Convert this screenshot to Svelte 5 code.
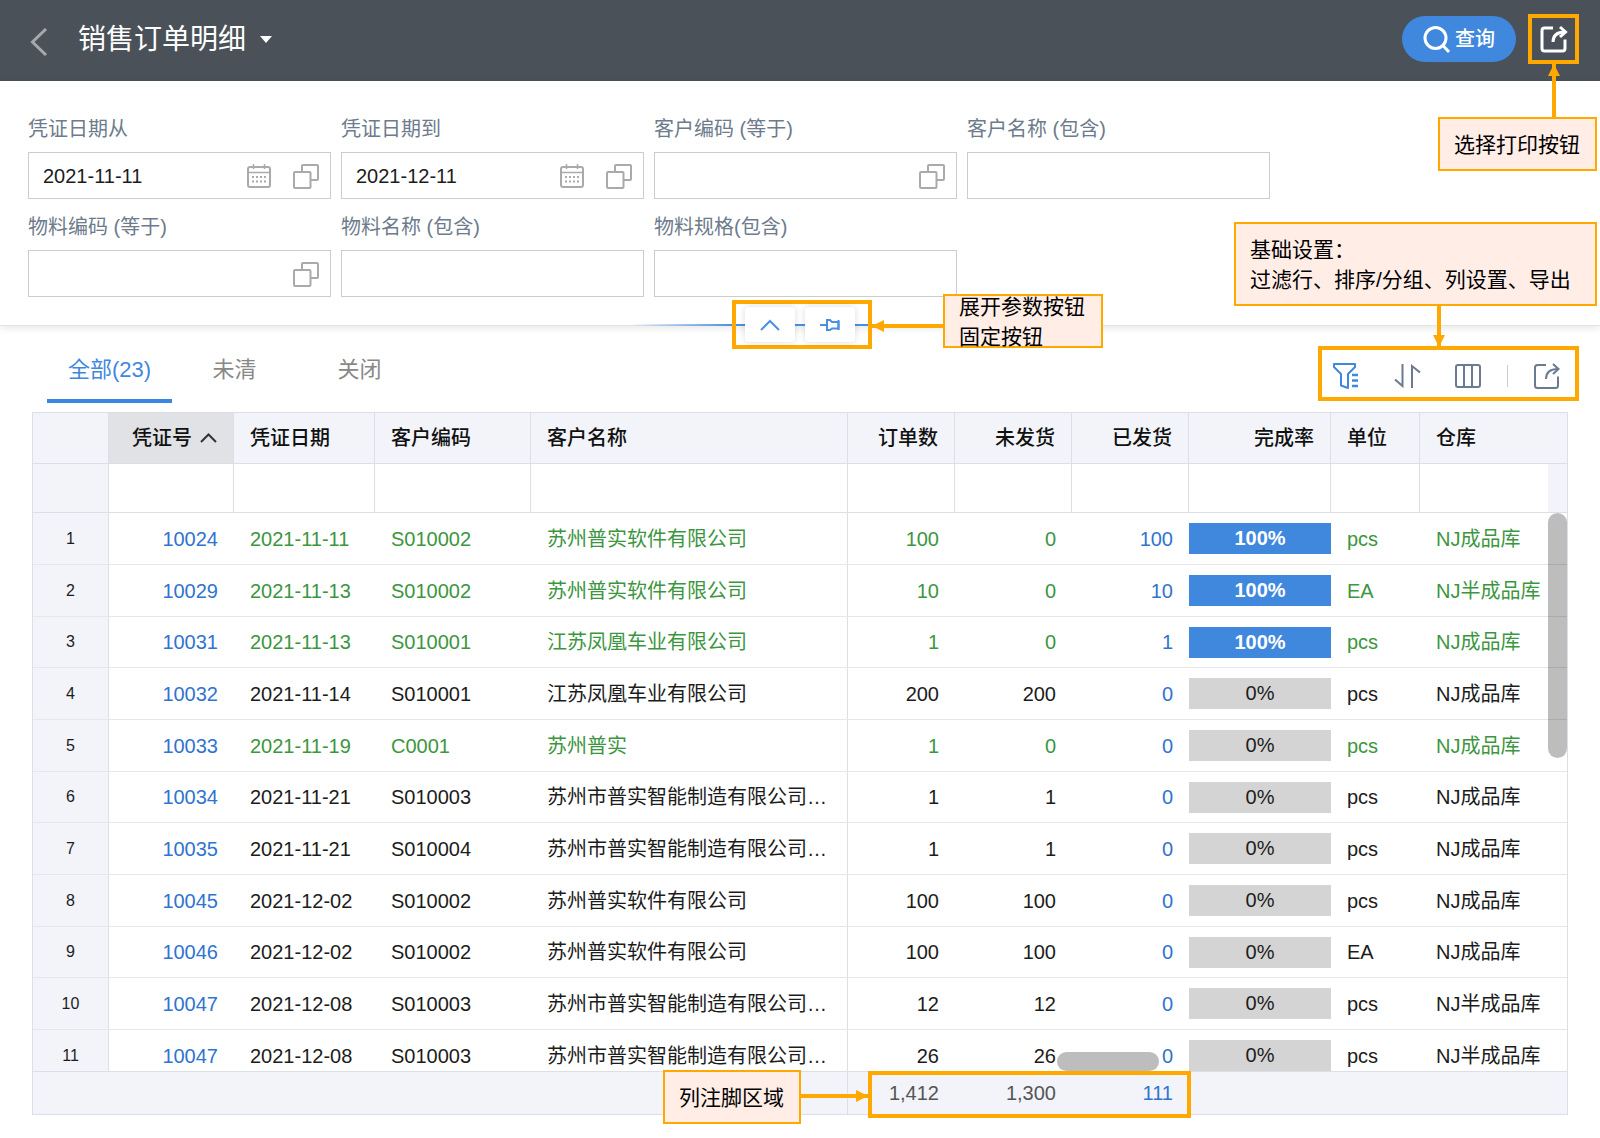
<script lang="ts">
  interface IField {
    id: string;
    label: string;
    value: string;
    date?: boolean;
    picker?: boolean;
  }
  interface IRow {
    no: string;
    date: string;
    code: string;
    name: string;
    ordered: string;
    open: string;
    shipped: string;
    rate: number;
    unit: string;
    store: string;
    done?: boolean;
  }

  let fields: IField[] = $state([
    { id: "dateFrom", label: "凭证日期从", value: "2021-11-11", date: true, picker: true },
    { id: "dateTo", label: "凭证日期到", value: "2021-12-11", date: true, picker: true },
    { id: "custCode", label: "客户编码 (等于)", value: "", picker: true },
    { id: "custName", label: "客户名称 (包含)", value: "" },
    { id: "itemCode", label: "物料编码 (等于)", value: "", picker: true },
    { id: "itemName", label: "物料名称 (包含)", value: "" },
    { id: "itemSpec", label: "物料规格(包含)", value: "" },
  ]);

  const tabs = ["全部(23)", "未清", "关闭"];
  let active = $state(0);

  const columns = [
    { title: "凭证号", num: true, sorted: true },
    { title: "凭证日期" },
    { title: "客户编码" },
    { title: "客户名称" },
    { title: "订单数", num: true },
    { title: "未发货", num: true },
    { title: "已发货", num: true },
    { title: "完成率", num: true },
    { title: "单位" },
    { title: "仓库" },
  ];

  const smart = "苏州市普实智能制造有限公司…";
  const soft = "苏州普实软件有限公司";
  const bike = "江苏凤凰车业有限公司";
  const rows: IRow[] = [
    { no: "10024", date: "2021-11-11", code: "S010002", name: soft, ordered: "100", open: "0", shipped: "100", rate: 100, unit: "pcs", store: "NJ成品库", done: true },
    { no: "10029", date: "2021-11-13", code: "S010002", name: soft, ordered: "10", open: "0", shipped: "10", rate: 100, unit: "EA", store: "NJ半成品库", done: true },
    { no: "10031", date: "2021-11-13", code: "S010001", name: bike, ordered: "1", open: "0", shipped: "1", rate: 100, unit: "pcs", store: "NJ成品库", done: true },
    { no: "10032", date: "2021-11-14", code: "S010001", name: bike, ordered: "200", open: "200", shipped: "0", rate: 0, unit: "pcs", store: "NJ成品库" },
    { no: "10033", date: "2021-11-19", code: "C0001", name: "苏州普实", ordered: "1", open: "0", shipped: "0", rate: 0, unit: "pcs", store: "NJ成品库", done: true },
    { no: "10034", date: "2021-11-21", code: "S010003", name: smart, ordered: "1", open: "1", shipped: "0", rate: 0, unit: "pcs", store: "NJ成品库" },
    { no: "10035", date: "2021-11-21", code: "S010004", name: smart, ordered: "1", open: "1", shipped: "0", rate: 0, unit: "pcs", store: "NJ成品库" },
    { no: "10045", date: "2021-12-02", code: "S010002", name: soft, ordered: "100", open: "100", shipped: "0", rate: 0, unit: "pcs", store: "NJ成品库" },
    { no: "10046", date: "2021-12-02", code: "S010002", name: soft, ordered: "100", open: "100", shipped: "0", rate: 0, unit: "EA", store: "NJ成品库" },
    { no: "10047", date: "2021-12-08", code: "S010003", name: smart, ordered: "12", open: "12", shipped: "0", rate: 0, unit: "pcs", store: "NJ半成品库" },
    { no: "10047", date: "2021-12-08", code: "S010003", name: smart, ordered: "26", open: "26", shipped: "0", rate: 0, unit: "pcs", store: "NJ半成品库" },
  ];
</script>

{#snippet exportIcon(width: number)}
  <svg width="28" height="28" viewBox="0 0 28 28" fill="none" stroke="currentColor" stroke-width={width}>
    <path d="M13 3H4.500Q2 3 2 5.500V23.500Q2 26 4.500 26H22.500Q25 26 25 23.500V14.500" />
    <path d="M13 17C13 10.500 17 7 25 7" />
    <path d="M20 2L25.500 7L20 12" />
  </svg>
{/snippet}

<header>
  <button class="back" aria-label="返回">
    <svg width="18" height="28" viewBox="0 0 18 28" fill="none" stroke="#a5a8ac" stroke-width="3">
      <path d="M16 1L2.500 14L16 27" />
    </svg>
  </button>
  <button class="title">
    <span>销售订单明细</span>
    <svg width="12" height="7" viewBox="0 0 12 7" fill="#fff"><path d="M0 0H12L6 7Z" /></svg>
  </button>
  <button class="query">
    <svg width="28" height="28" viewBox="0 0 28 28" fill="none" stroke="#fff" stroke-width="3">
      <circle cx="12.500" cy="13" r="10.500" />
      <path d="M19.500 20L26 27" />
    </svg>
    <span>查询</span>
  </button>
  <div class="mark print">
    <button class="tool light" aria-label="打印">{@render exportIcon(3)}</button>
    <i class="arrow up"></i>
    <p class="note">选择打印按钮</p>
  </div>
</header>

<form class="params">
  {#each fields as field (field.id)}
    <div class="field">
      <label for={field.id}>{field.label}</label>
      <div class="box">
        <input id={field.id} type="text" bind:value={field.value} />
        {#if field.date}
          <button type="button" aria-label="选择日期">
            <svg width="24" height="24" viewBox="0 0 24 24" fill="none" stroke="#aaa" stroke-width="2">
              <rect x="1" y="3" width="22" height="20" rx="2" />
              <path d="M1 8.500H23M6.500 0V5M17.500 0V5" stroke-width="1.500" />
              <path d="M5 13H19M5 17.500H19" stroke-dasharray="2 2" />
            </svg>
          </button>
        {/if}
        {#if field.picker}
          <button type="button" aria-label="选择">
            <svg width="26" height="26" viewBox="0 0 26 26" fill="none" stroke="#aaa" stroke-width="2">
              <path d="M9 8V3Q9 2 10 2H24Q25 2 25 3V16Q25 17 24 17H18" />
              <rect x="1" y="9" width="16.500" height="16" rx="1" />
            </svg>
          </button>
        {/if}
      </div>
    </div>
  {/each}
  <div class="mark toggle">
    <button type="button" aria-label="展开参数">
      <svg width="20" height="12" viewBox="0 0 20 12" fill="none" stroke="#4a90e2" stroke-width="2">
        <path d="M1 11L10 2L19 11" />
      </svg>
    </button>
    <button type="button" aria-label="固定">
      <svg width="20" height="14" viewBox="0 0 20 14" fill="none" stroke="#4a90e2" stroke-width="2">
        <path d="M0 7H7M7 1V13M7 2H10L12 4H18.500V10.500H12L10 12H7" />
        <path d="M18.500 2V12" />
      </svg>
    </button>
    <i class="arrow left"></i>
    <p class="note tight">展开参数按钮<br />固定按钮</p>
  </div>
</form>

<div class="bar">
  <nav>
    {#each tabs as tab, i}
      <button class:active={i == active} onclick={() => (active = i)}>{tab}</button>
    {/each}
  </nav>
  <div class="mark tools">
    <button class="tool blue" aria-label="过滤行">
      <svg width="28" height="28" viewBox="0 0 28 28" fill="none" stroke="currentColor" stroke-width="2">
        <path d="M2 2H23V5L16 12V26L9 23.500V12L2 5Z" stroke-linejoin="round" />
        <path d="M20 13H26M20 18.500H26M20 24H26" stroke-width="2.500" />
      </svg>
    </button>
    <button class="tool" aria-label="排序/分组">
      <svg width="28" height="28" viewBox="0 0 28 28" fill="none" stroke="currentColor" stroke-width="2">
        <path d="M9.500 2V24L2 17.500M19 26V4L27 10.500" />
      </svg>
    </button>
    <button class="tool" aria-label="列设置">
      <svg width="28" height="28" viewBox="0 0 28 28" fill="none" stroke="currentColor" stroke-width="2">
        <rect x="2" y="3" width="24" height="22" rx="2" />
        <path d="M10 3V25M18 3V25" />
      </svg>
    </button>
    <span class="sep"></span>
    <button class="tool" aria-label="导出">{@render exportIcon(2)}</button>
    <i class="arrow down"></i>
    <p class="note wide">基础设置：<br />过滤行、排序/分组、列设置、导出</p>
  </div>
</div>

<div class="grid">
  <table>
    <thead>
      <tr>
        <th></th>
        {#each columns as col}
          <th class:num={col.num} class:sorted={col.sorted}>
            {col.title}
            {#if col.sorted}
              <svg width="17" height="10" viewBox="0 0 17 10" fill="none" stroke="#333" stroke-width="2">
                <path d="M1 9L8.500 1.500L16 9" />
              </svg>
            {/if}
          </th>
        {/each}
      </tr>
      <tr class="filter">
        <td></td>
        {#each columns as col}
          <td><input type="text" aria-label={col.title} /></td>
        {/each}
      </tr>
    </thead>
    <tbody>
      {#each rows as row, i}
        <tr class:done={row.done}>
          <th>{i + 1}</th>
          <td class="num"><a href="#{row.no}">{row.no}</a></td>
          <td>{row.date}</td>
          <td>{row.code}</td>
          <td class="frozen">{row.name}</td>
          <td class="num">{row.ordered}</td>
          <td class="num">{row.open}</td>
          <td class="num"><a href="#{row.no}">{row.shipped}</a></td>
          <td class="rate"><span class:full={row.rate == 100}>{row.rate}%</span></td>
          <td>{row.unit}</td>
          <td>{row.store}</td>
        </tr>
      {/each}
    </tbody>
    <tfoot>
      <tr>
        <td></td>
        <td></td>
        <td></td>
        <td></td>
        <td class="frozen"></td>
        <td class="num">1,412</td>
        <td class="num">1,300</td>
        <td class="num"><a href="#shipped">111</a></td>
        <td></td>
        <td></td>
        <td></td>
      </tr>
    </tfoot>
  </table>
  <span class="thumb-y"></span>
  <span class="thumb-x"></span>
  <div class="mark footer">
    <i class="arrow right"></i>
    <p class="note">列注脚区域</p>
  </div>
</div>

<style>
  :global(body) {
    margin: 0;
    background: #fff;
    color: #1c1c1c;
    font-family: "Liberation Sans", "Noto Sans CJK SC", sans-serif;
    font-size: 20px;
    line-height: 28px;
  }
  button,
  input {
    font: inherit;
    color: inherit;
    background: none;
    border: none;
    padding: 0;
    margin: 0;
    outline: none;
  }
  button {
    cursor: pointer;
  }
  svg {
    display: block;
    flex: none;
  }
  a {
    color: #2f74d0;
    text-decoration: none;
  }

  header {
    display: flex;
    align-items: center;
    height: 81px;
    box-sizing: border-box;
    padding: 0 21px 4px 30px;
    background: #4b5158;
    color: #fff;
  }
  .back {
    padding-top: 6px;
  }
  .title {
    display: flex;
    align-items: center;
    gap: 14px;
    margin: 0 auto 0 30px;
    padding-top: 2px;
    font-size: 28px;
    line-height: 40px;
  }
  .query {
    display: flex;
    align-items: center;
    justify-content: center;
    gap: 4px;
    width: 114px;
    height: 46px;
    margin-right: 12px;
    border-radius: 23px;
    background: #3f88de;
    font-weight: 500;
  }

  /* callouts */
  .mark {
    position: relative;
    display: flex;
    align-items: center;
    box-sizing: border-box;
    border: 4px solid #ffa800;
  }
  .note {
    position: absolute;
    z-index: 2;
    box-sizing: border-box;
    margin: 0;
    padding: 11px 15px 9px 14px;
    border: 2px solid #ffa800;
    background: #ffede6;
    color: #000;
    font-size: 21px;
    line-height: 30px;
    white-space: nowrap;
  }
  .arrow {
    position: absolute;
    z-index: 2;
    background: #ffa800;
  }
  .arrow::after {
    content: "";
    position: absolute;
    border: 6px solid transparent;
  }
  .up,
  .down {
    width: 4px;
  }
  .left,
  .right {
    height: 4px;
  }
  .up::after {
    left: -4px;
    top: 0;
    border-top: 0;
    border-bottom: 12px solid #ffa800;
  }
  .down::after {
    left: -4px;
    bottom: 0;
    border-bottom: 0;
    border-top: 12px solid #ffa800;
  }
  .left::after {
    left: 0;
    top: -4px;
    border-left: 0;
    border-right: 12px solid #ffa800;
  }
  .right::after {
    right: 0;
    top: -4px;
    border-right: 0;
    border-left: 12px solid #ffa800;
  }

  .tool {
    color: #6b7a90;
  }
  .light {
    color: #fff;
  }
  .blue {
    color: #3f88de;
  }
  .print {
    justify-content: center;
    width: 51px;
    height: 50px;
  }
  .print .arrow {
    left: 20px;
    top: 46px;
    height: 54px;
  }
  .print .note {
    right: -22px;
    top: 99px;
  }

  .params {
    position: relative;
    display: grid;
    grid-template-columns: repeat(4, minmax(0, 303px));
    gap: 14px 10px;
    padding: 34px 28px 28px;
    border-bottom: 1px solid #e4e4e4;
    box-shadow: 0 2px 8px rgba(0, 0, 0, 0.1);
  }
  .params::after {
    content: "";
    position: absolute;
    left: 50%;
    bottom: -1px;
    width: 340px;
    height: 2px;
    transform: translateX(-50%);
    background: linear-gradient(90deg, transparent, #4a90e2 30%, #4a90e2 70%, transparent);
  }
  .field {
    display: flex;
    flex-direction: column;
    gap: 9px;
  }
  label {
    color: #6d7b8c;
  }
  .box {
    display: flex;
    align-items: center;
    gap: 22px;
    height: 47px;
    box-sizing: border-box;
    padding: 0 11px 0 14px;
    border: 1px solid #ccc;
  }
  .box input {
    flex: 1;
    min-width: 0;
  }
  .toggle {
    position: absolute;
    z-index: 1;
    left: calc(50% - 68px);
    bottom: -24px;
    gap: 10px;
    height: 49px;
    padding: 0 13px 0 9px;
  }
  .toggle button {
    display: flex;
    align-items: center;
    justify-content: center;
    width: 50px;
    height: 35px;
    border-radius: 4px;
    background: #fff;
    box-shadow: 0 0 6px rgba(0, 0, 0, 0.14);
  }
  .toggle .arrow {
    left: calc(100% + 4px);
    top: 20px;
    width: 72px;
  }
  .tight {
    left: calc(100% + 75px);
    top: -10px;
    display: grid;
    align-content: center;
    width: 160px;
    height: 54px;
    padding: 2px 14px 0;
  }

  .bar {
    display: flex;
    justify-content: space-between;
    padding: 0 21px 0 47px;
  }
  nav {
    display: flex;
  }
  nav button {
    width: 125px;
    height: 77px;
    box-sizing: border-box;
    padding-top: 14px;
    border-bottom: 4px solid transparent;
    color: #888;
    font-size: 22px;
  }
  nav .active {
    border-color: #3a86e0;
    color: #3f88de;
  }
  .tools {
    gap: 33px;
    width: 261px;
    height: 55px;
    margin-top: 20px;
    padding: 4px 0 0 10px;
  }
  .sep {
    flex: none;
    width: 1px;
    height: 22px;
    margin: 0 -8px;
    background: #ccc;
  }
  .tools .arrow {
    left: 115px;
    top: -44px;
    height: 41px;
  }
  .wide {
    right: -22px;
    bottom: 91px;
    width: 363px;
  }

  .grid {
    position: relative;
    margin: 9px 32px 24px;
    border: 1px solid #dcdfe7;
  }
  table,
  thead,
  tbody,
  tfoot {
    display: block;
  }
  tr {
    display: grid;
    grid-template-columns: 76px 125px 141px 156px minmax(0, 1fr) 107px 117px 117px 142px 89px 147px;
    height: 52px;
    box-sizing: border-box;
    border-bottom: 1px solid #e6e7ea;
  }
  th,
  td {
    display: flex;
    align-items: center;
    box-sizing: border-box;
    padding: 0 16px;
    white-space: nowrap;
  }
  .num {
    justify-content: flex-end;
  }
  thead tr {
    height: 51px;
    border-color: #dcdfe7;
  }
  thead .filter {
    height: 49px;
  }
  thead th,
  thead td,
  .frozen,
  tbody th {
    border-right: 1px solid #dcdfe7;
  }
  thead th:last-child,
  thead td:last-child {
    border-right: none;
  }
  thead th {
    gap: 8px;
    background: #f2f4f9;
    color: #111;
    font-weight: 500;
  }
  thead .sorted {
    background: #e1e2e6;
  }
  .filter td:first-child {
    background: #f2f4f9;
  }
  .filter td:last-child {
    border-right: 19px solid #f2f4f9;
  }
  .filter input {
    width: 100%;
  }
  tbody {
    height: 558px;
    overflow: hidden;
  }
  tbody tr:nth-child(3n) {
    height: 51px;
  }
  tbody th {
    justify-content: center;
    background: #f2f4f9;
    font-size: 16px;
    font-weight: 400;
  }
  .done td {
    color: #3c9640;
  }
  tbody .rate {
    padding: 0;
  }
  .rate span {
    width: 100%;
    background: #d4d4d4;
    color: #1c1c1c;
    line-height: 31px;
    text-align: center;
  }
  .rate .full {
    background: #3f88de;
    color: #fff;
    font-weight: 700;
  }
  tfoot tr {
    height: 43px;
    border-top: 1px solid #dcdfe7;
    border-bottom: none;
    background: #f2f4f9;
    color: #555;
  }

  .thumb-y,
  .thumb-x {
    position: absolute;
    border-radius: 10px;
    background: rgba(0, 0, 0, 0.26);
  }
  .thumb-y {
    top: 100px;
    right: 0;
    width: 19px;
    height: 245px;
  }
  .thumb-x {
    right: 408px;
    bottom: 43px;
    width: 102px;
    height: 19px;
    background: #bdbdbd;
  }
  .footer {
    position: absolute;
    right: 376px;
    bottom: -4px;
    width: 323px;
    height: 47px;
  }
  .footer .arrow {
    right: calc(100% + 4px);
    top: 19px;
    width: 68px;
  }
  .footer .note {
    right: calc(100% + 71px);
    top: -5px;
  }
</style>
